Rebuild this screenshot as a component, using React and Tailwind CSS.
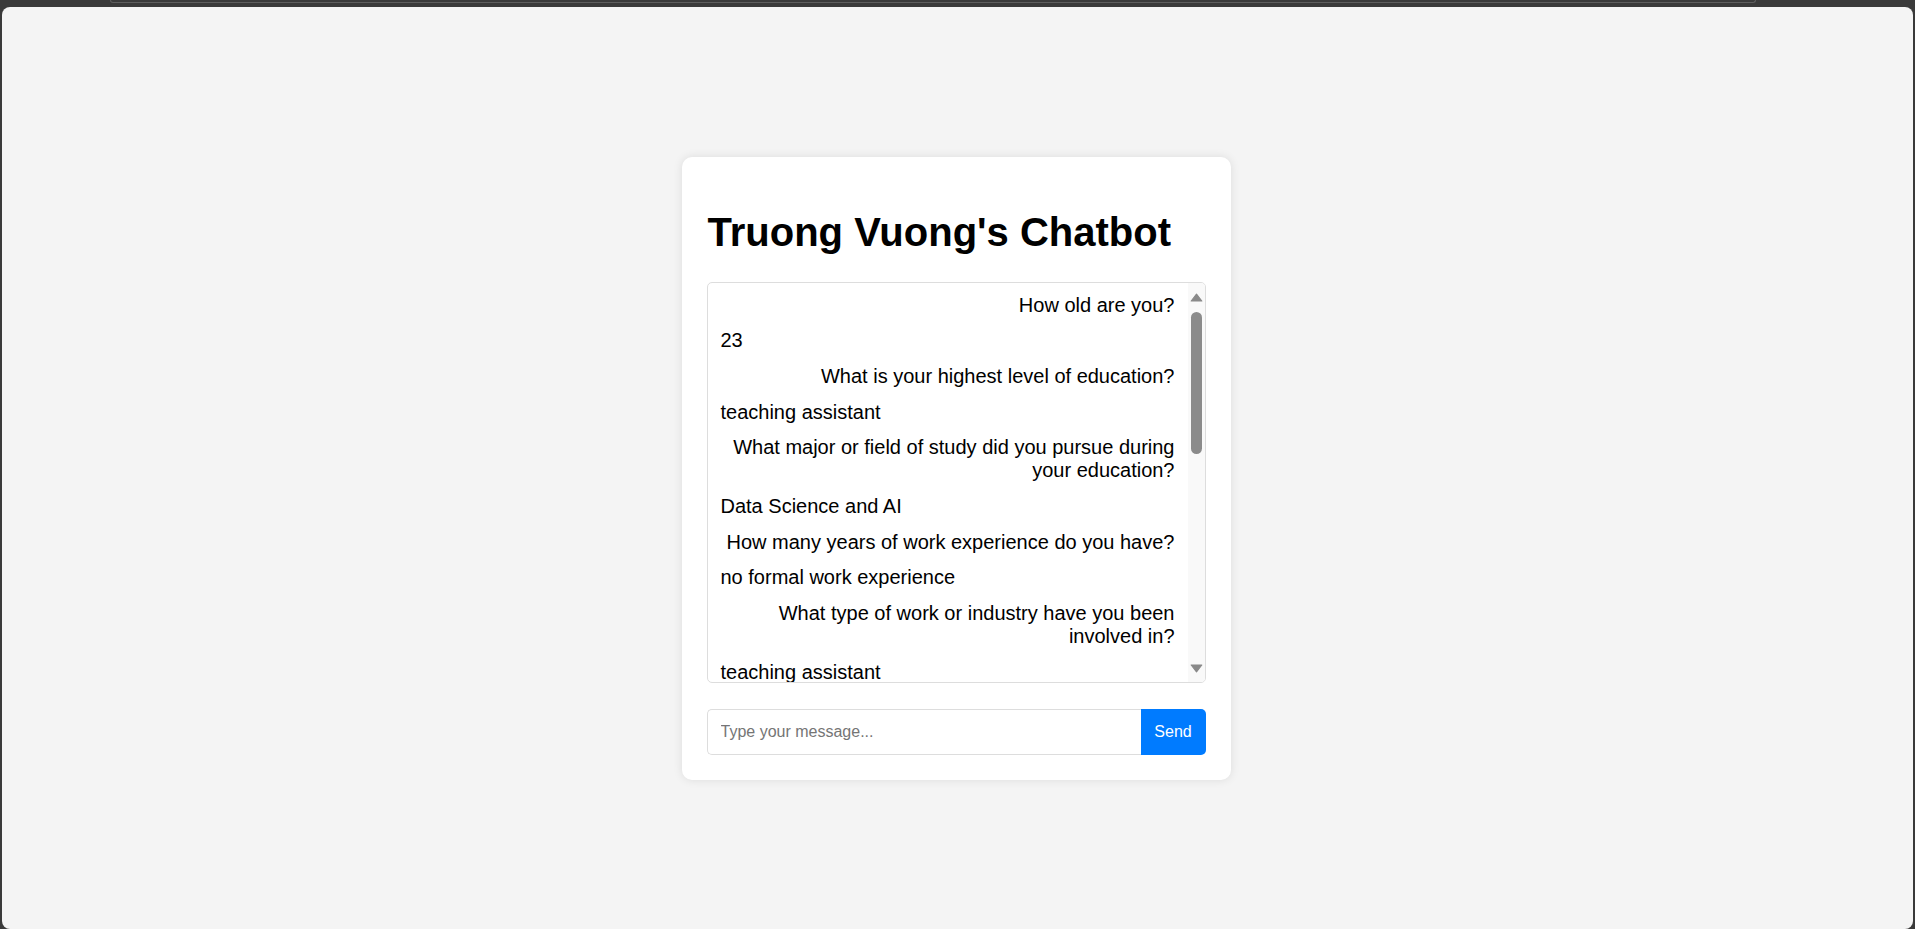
import React from "react";

const messages = [
  { side: "user", text: "How old are you?" },
  { side: "bot", text: "23" },
  { side: "user", text: "What is your highest level of education?" },
  { side: "bot", text: "teaching assistant" },
  { side: "user", text: "What major or field of study did you pursue during your education?" },
  { side: "bot", text: "Data Science and AI" },
  { side: "user", text: "How many years of work experience do you have?" },
  { side: "bot", text: "no formal work experience" },
  { side: "user", text: "What type of work or industry have you been involved in?" },
  { side: "bot", text: "teaching assistant" },
];

export default function App() {
  return (
    <div
      className="h-[929px] w-full overflow-hidden bg-[#3a3a3a] flex flex-col px-[2px]"
      style={{ fontFamily: '"Liberation Sans", Arial, sans-serif' }}
    >
      <div className="h-[7px] shrink-0">
        <div className="ml-[108px] w-[1646px] h-[3px] border-b border-x border-[#5e5e5e] rounded-b-[4px]" />
      </div>
      <div className="flex-1 rounded-[8px] bg-[#f4f4f4] flex items-center justify-center">
        <div className="mr-[3px] w-[549px] bg-white rounded-[10px] shadow-[0_0_10px_rgba(0,0,0,0.1)] px-[25px] pt-[25px] pb-[25px]">
          <h1 className="text-[40px] leading-[46px] font-bold text-black my-[27px] pl-[1px]">
            Truong Vuong's Chatbot
          </h1>
          <div className="h-[401px] border border-[#dddddd] rounded-[5px] flex overflow-hidden">
            <div className="flex-1 overflow-hidden pl-[13px] pr-[13px] pt-[11px] flex flex-col gap-[12.7px]">
              {messages.map((m, i) => (
                <div
                  key={i}
                  className={
                    "shrink-0 text-[20px] leading-[23px] text-black " +
                    (m.side === "user" ? "text-right" : "text-left")
                  }
                >
                  {m.text}
                </div>
              ))}
            </div>
            <div className="w-[17px] shrink-0 bg-[#f9f9f9] flex flex-col items-center pl-[1px]">
              <svg width="13" height="9" viewBox="0 0 13 9" className="mt-[10px]">
                <path d="M6.5 1.2 L11.8 8 L1.2 8 Z" fill="#8a8a8a" stroke="#8a8a8a" strokeWidth="1.2" strokeLinejoin="round" />
              </svg>
              <div className="mt-[10px] w-[11px] h-[142px] rounded-full bg-[#8b8b8b]" />
              <div className="flex-1" />
              <svg width="13" height="9" viewBox="0 0 13 9" className="mb-[9px]">
                <path d="M1.2 1 L11.8 1 L6.5 7.8 Z" fill="#8a8a8a" stroke="#8a8a8a" strokeWidth="1.2" strokeLinejoin="round" />
              </svg>
            </div>
          </div>
          <div className="mt-[26px] flex h-[46px]">
            <input
              type="text"
              placeholder="Type your message..."
              className="flex-1 min-w-0 border border-[#dddddd] border-r-0 rounded-l-[5px] px-[13px] text-[16px] text-black placeholder:text-[#757575] outline-none bg-white"
              style={{ fontFamily: '"Liberation Sans", Arial, sans-serif' }}
            />
            <button
              className="w-[65px] bg-[#007bff] text-white text-[16px] rounded-r-[5px]"
              style={{ fontFamily: '"Liberation Sans", Arial, sans-serif' }}
            >
              Send
            </button>
          </div>
        </div>
      </div>
    </div>
  );
}
